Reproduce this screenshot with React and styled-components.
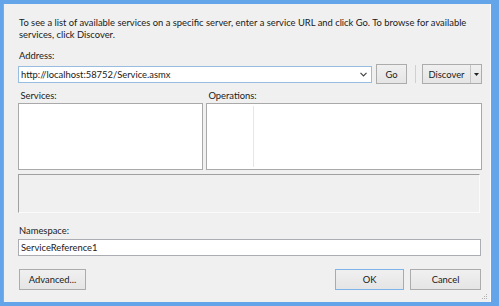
import React from 'react';
import styled, {createGlobalStyle} from 'styled-components';

const GlobalStyle = createGlobalStyle`
    html, body {
        margin: 0;
        padding: 0;
        background: #64a4e8;
    }
    body {
        font-family: Lato, "Noto Sans", sans-serif;
        font-size: 9.4px;
        color: #1a1a1a;
    }
`;

const Frame = styled.div`
    width: 499px;
    height: 306px;
    box-sizing: border-box;
    padding: 4px 8px 4px 3px;
    background: #64a4e8;
    display: flex;
`;

const Dialog = styled.div`
    flex: 1;
    position: relative;
    background: #f0f0f0;
    border-left: 1px solid #8aa9c8;
    border-right: 1px solid #f8fbff;
    padding: 13px 8px 0 15px;
    display: flex;
    flex-direction: column;
`;

const Intro = styled.p`
    margin: 0;
    width: 462px;
    line-height: 12px;
`;

const Label = styled.div`
    line-height: 12px;
    margin-top: ${p => p.$top || 0}px;
`;

const Row = styled.div`
    display: flex;
    align-items: center;
    margin-top: ${p => p.$top || 0}px;
`;

const Combo = styled.div`
    width: 354px;
    height: 17px;
    box-sizing: border-box;
    border: 1px solid #99bde0;
    background: #fff;
    display: flex;
    align-items: center;
    justify-content: space-between;
    padding: 0 4px 0 2px;
    margin-left: -1px;
`;

const Button = styled.button`
    font: inherit;
    color: #1a1a1a;
    height: ${p => p.$h || 20}px;
    width: ${p => p.$w}px;
    padding: 0;
    box-sizing: border-box;
    border: 1px solid ${p => (p.$default ? '#7eb4ea' : '#acacac')};
    background: linear-gradient(#f0f0f0, #e5e5e5);
    margin-left: ${p => p.$left || 0}px;
    display: flex;
    align-items: center;
    justify-content: center;
`;

const Separator = styled.div`
    width: 1px;
    height: 18px;
    background: #d0d0d0;
    margin: 0 6px 0 8px;
`;

const Split = styled.div`
    display: flex;
    height: 20px;
    box-sizing: border-box;
    border: 1px solid #acacac;
    background: linear-gradient(#f0f0f0, #e5e5e5);
`;

const SplitMain = styled.div`
    width: 47px;
    display: flex;
    align-items: center;
    justify-content: center;
`;

const SplitArrow = styled.div`
    width: 10px;
    border-left: 1px solid #c4c4c4;
    display: flex;
    align-items: center;
    justify-content: center;
`;

const Lists = styled.div`
    display: grid;
    grid-template-columns: 185px 276px;
    column-gap: 3px;
    margin-left: -1px;
`;

const ListBox = styled.div`
    height: 67px;
    box-sizing: border-box;
    border: 1px solid #a9a9a9;
    background: #fff;
    margin-top: 1px;
    position: relative;
`;

const ColumnLine = styled.div`
    position: absolute;
    left: 46px;
    top: 2px;
    bottom: 2px;
    width: 1px;
    background: #e6e6e6;
`;

const Info = styled.div`
    width: 462px;
    height: 39px;
    box-sizing: border-box;
    margin: 4px 0 0 -1px;
    border-top: 1px solid #a0a0a0;
    border-left: 1px solid #a0a0a0;
    border-bottom: 1px solid #fbfbfb;
    border-right: 1px solid #fbfbfb;
`;

const TextBox = styled.div`
    width: 463px;
    height: 17px;
    box-sizing: border-box;
    border: 1px solid #abadb3;
    background: #fff;
    margin: 2px 0 0 -1px;
    padding-left: 2px;
    display: flex;
    align-items: center;
`;

const Footer = styled.div`
    display: flex;
    align-items: center;
    margin-top: 13px;
    width: 462px;
`;

const Spacer = styled.div`
    flex: 1;
`;

const Grip = styled.svg`
    position: absolute;
    right: 2px;
    bottom: 2px;
`;

const Chevron = () => (
    <svg width="7" height="5" viewBox="0 0 7 5">
        <path d="M0.5 0.8 L3.5 3.8 L6.5 0.8" fill="none" stroke="#444" strokeWidth="1.2"/>
    </svg>
);

const App = () => (
    <>
        <GlobalStyle/>
        <Frame>
            <Dialog>
                <Intro>
                    To see a list of available services on a specific server, enter a service URL and click Go. To browse for available services, click Discover.
                </Intro>
                <Label $top={9}>Address:</Label>
                <Row $top={2}>
                    <Combo>
                        <span>http://localhost:58752/Service.asmx</span>
                        <Chevron/>
                    </Combo>
                    <Button $w={31} $left={4}>Go</Button>
                    <Separator/>
                    <Split>
                        <SplitMain>Discover</SplitMain>
                        <SplitArrow>
                            <svg width="5" height="3" viewBox="0 0 5 3">
                                <path d="M0 0 H5 L2.5 3 Z" fill="#222"/>
                            </svg>
                        </SplitArrow>
                    </Split>
                </Row>
                <Lists>
                    <Label $top={6}>&nbsp;Services:</Label>
                    <Label $top={6}>&nbsp;Operations:</Label>
                    <ListBox/>
                    <ListBox><ColumnLine/></ListBox>
                </Lists>
                <Info/>
                <Label $top={12}>Namespace:</Label>
                <TextBox>ServiceReference1</TextBox>
                <Footer>
                    <Button $w={67} $h={21}>Advanced...</Button>
                    <Spacer/>
                    <Button $w={69} $h={21} $default>OK</Button>
                    <Button $w={71} $h={21} $left={6}>Cancel</Button>
                </Footer>
                <Grip width="6" height="6" viewBox="0 0 6 6">
                    <rect x="4" y="0" width="1" height="1" fill="#b0b0b0"/>
                    <rect x="2" y="2" width="1" height="1" fill="#b0b0b0"/>
                    <rect x="4" y="2" width="1" height="1" fill="#b0b0b0"/>
                    <rect x="0" y="4" width="1" height="1" fill="#b0b0b0"/>
                    <rect x="2" y="4" width="1" height="1" fill="#b0b0b0"/>
                    <rect x="4" y="4" width="1" height="1" fill="#b0b0b0"/>
                </Grip>
            </Dialog>
        </Frame>
    </>
);

export default App;
